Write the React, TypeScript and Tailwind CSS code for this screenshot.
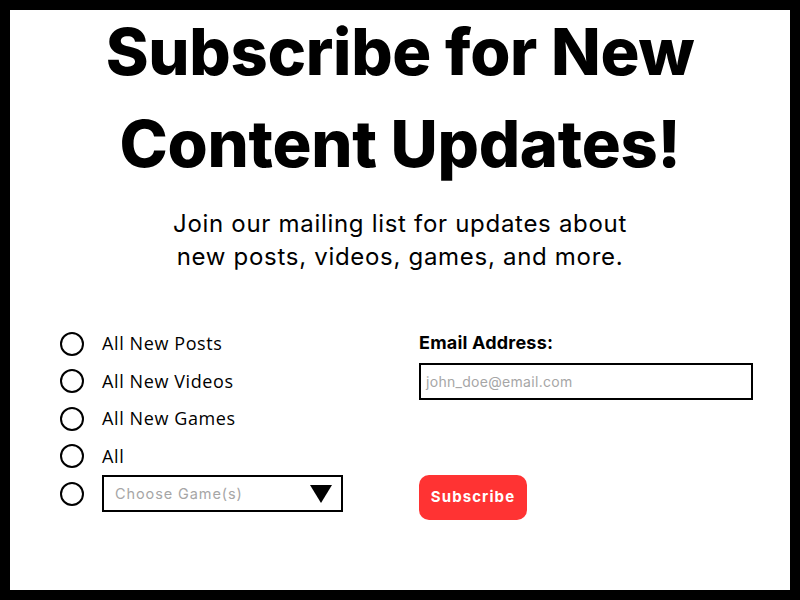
import React from 'react';

const options = ['All New Posts', 'All New Videos', 'All New Games', 'All'];

const Radio: React.FC = () => (
  <span className="w-6 h-6 rounded-full border-2 border-black shrink-0" />
);

export default function App() {
  return (
    <div className="w-[800px] h-[600px] border-[10px] border-black bg-white flex flex-col items-center font-['Inter',sans-serif] text-black">
      {/* Heading */}
      <h1 className="-mt-[4px] text-[65px] leading-[92px] font-extrabold text-center tracking-[-0.3px]">
        Subscribe for New
        <br />
        Content Updates!
      </h1>
      <p className="mt-[17px] text-[24px] leading-[33px] text-center tracking-[0.7px]">
        Join our mailing list for updates about
        <br />
        new posts, videos, games, and more.
      </p>

      {/* Form */}
      <div className="w-full flex mt-[52px] pl-[50px]">
        <div className="w-[359px] flex flex-col">
          {options.map((o) => (
            <label key={o} className="h-[37.5px] flex items-center gap-[18px]">
              <Radio />
              <span className="text-[18px] tracking-[0.6px] font-['Open_Sans',sans-serif]">{o}</span>
            </label>
          ))}
          <div className="h-[37.5px] flex items-center gap-[18px]">
            <Radio />
            <div className="w-[241px] h-[37px] border-2 border-black flex items-center justify-between pl-[11px] pr-[9px]">
              <span className="text-[14.5px] tracking-[0.9px] text-[#a6a6a6]">Choose Game(s)</span>
              <svg width="22" height="18" viewBox="0 0 22 18">
                <polygon points="0,0 22,0 11,18" fill="black" />
              </svg>
            </div>
          </div>
        </div>

        <div className="flex flex-col">
          <label className="text-[18px] font-bold leading-[36px] tracking-[0.2px]">Email Address:</label>
          <div className="mt-[2px] w-[334px] h-[37px] border-2 border-black flex items-center px-[5px]">
            <span className="text-[14px] tracking-[0.3px] text-[#a6a6a6]">john_doe@email.com</span>
          </div>
          <button className="mt-[75px] w-[108px] h-[45px] rounded-[10px] bg-[#ff3333] text-white text-[15px] font-bold tracking-[1.1px]">
            Subscribe
          </button>
        </div>
      </div>
    </div>
  );
}
